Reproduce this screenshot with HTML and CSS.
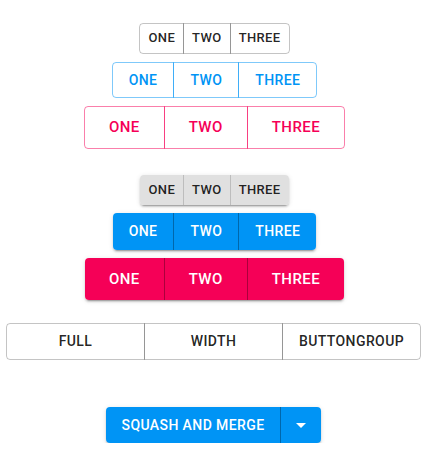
FILE: index.html
```html
<!DOCTYPE html>
<html lang="en">
<head>
    <meta charset="UTF-8">
    <meta name="viewport" content="width=device-width, initial-scale=1.0">
    <title>Button groups</title>
    <link rel="stylesheet" href="styles.css">
</head>
<body>

<!-- outlined groups -->
<div class="stack first">
    <div class="btn-group outlined small">
        <button>One</button><button>Two</button><button>Three</button>
    </div>
    <div class="btn-group outlined primary">
        <button>One</button><button>Two</button><button>Three</button>
    </div>
    <div class="btn-group outlined secondary large">
        <button>One</button><button>Two</button><button>Three</button>
    </div>
</div>

<!-- contained groups -->
<div class="stack second">
    <div class="btn-group contained small">
        <button>One</button><button>Two</button><button>Three</button>
    </div>
    <div class="btn-group contained primary">
        <button>One</button><button>Two</button><button>Three</button>
    </div>
    <div class="btn-group contained secondary large">
        <button>One</button><button>Two</button><button>Three</button>
    </div>
</div>

<div class="full-row">
    <div class="btn-group outlined full">
        <button>Full</button><button>width</button><button>ButtonGroup</button>
    </div>
</div>

<div class="split-row">
    <div class="btn-group contained primary split">
        <button>Squash and merge</button>
        <button class="arrow" aria-label="select merge strategy">
            <svg viewBox="0 0 24 24" width="24" height="24"><path d="M7 10l5 5 5-5z" fill="currentColor"/></svg>
        </button>
    </div>
</div>

</body>
</html>
```

FILE: styles.css
```css
body {
    margin: 0;
    font-family: Roboto, "Liberation Sans", sans-serif;
    background-color: #fff;
}

.stack {
    display: flex;
    flex-direction: column;
    align-items: center;
    gap: 8px;
}

.stack.first {
    padding-top: 23px;
}

.stack.second {
    margin-top: 26px;
}

.btn-group {
    display: inline-flex;
    border-radius: 4px;
}

.btn-group button {
    font-family: inherit;
    font-size: 14px;
    font-weight: 500;
    line-height: 1.75;
    letter-spacing: 0.02857em;
    text-transform: uppercase;
    min-width: 40px;
    padding: 5px 16px;
    margin: 0;
    background: none;
    border: 0;
    border-radius: 0;
    cursor: pointer;
    color: rgba(0, 0, 0, 0.87);
}

.btn-group button:first-child {
    border-radius: 4px 0 0 4px;
}

.btn-group button:last-child {
    border-radius: 0 4px 4px 0;
}

/* outlined */
.outlined button {
    border: 1px solid rgba(0, 0, 0, 0.23);
}

.outlined button:not(:first-child) {
    margin-left: -1px;
}

.outlined.small button {
    font-size: 13px;
    padding: 3px 8px;
}

.outlined.large button {
    font-size: 15px;
    padding: 7px 24px;
}

.outlined.primary button {
    color: #0094f5;
    border-color: rgba(0, 148, 245, 0.5);
}

.outlined.secondary button {
    color: #f50057;
    border-color: rgba(245, 0, 87, 0.5);
}

/* contained */
.contained {
    box-shadow: 0 3px 1px -2px rgba(0, 0, 0, 0.2), 0 2px 2px 0 rgba(0, 0, 0, 0.14), 0 1px 5px 0 rgba(0, 0, 0, 0.12);
}

.contained button {
    padding: 6px 16px;
    background-color: #e0e0e0;
}

.contained button:not(:last-child) {
    border-right: 1px solid #bdbdbd;
}

.contained.small button {
    font-size: 13px;
    padding: 4px 8px;
}

.contained.large button {
    font-size: 15px;
    padding: 8px 24px;
}

.contained.primary button {
    color: #fff;
    background-color: #0094f5;
}

.contained.primary button:not(:last-child) {
    border-right-color: #0067ab;
}

.contained.secondary button {
    color: #fff;
    background-color: #f50057;
}

.contained.secondary button:not(:last-child) {
    border-right-color: #ab003c;
}

/* full width */
.full-row {
    margin: 23px 8px 0 6px;
}

.btn-group.full {
    display: flex;
}

.full button {
    flex: 1;
}

/* split button */
.split-row {
    display: flex;
    justify-content: center;
    margin-top: 47px;
    padding-right: 2px;
}

.split .arrow {
    display: flex;
    align-items: center;
    justify-content: center;
    padding: 5px 8px;
}

.split .arrow svg {
    display: block;
}
```
